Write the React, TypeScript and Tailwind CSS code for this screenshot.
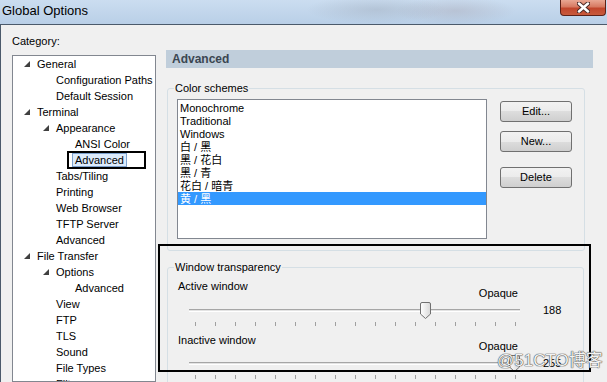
import React from 'react';

interface TreeItem {
  label: string;
  level: number;
  arrow?: boolean;
  selected?: boolean;
}

const treeItems: TreeItem[] = [
  { label: 'General', level: 0, arrow: true },
  { label: 'Configuration Paths', level: 1 },
  { label: 'Default Session', level: 1 },
  { label: 'Terminal', level: 0, arrow: true },
  { label: 'Appearance', level: 1, arrow: true },
  { label: 'ANSI Color', level: 2 },
  { label: 'Advanced', level: 2, selected: true },
  { label: 'Tabs/Tiling', level: 1 },
  { label: 'Printing', level: 1 },
  { label: 'Web Browser', level: 1 },
  { label: 'TFTP Server', level: 1 },
  { label: 'Advanced', level: 1 },
  { label: 'File Transfer', level: 0, arrow: true },
  { label: 'Options', level: 1, arrow: true },
  { label: 'Advanced', level: 2 },
  { label: 'View', level: 1 },
  { label: 'FTP', level: 1 },
  { label: 'TLS', level: 1 },
  { label: 'Sound', level: 1 },
  { label: 'File Types', level: 1 },
  { label: 'Filters', level: 1 },
];

const schemes = ['Monochrome', 'Traditional', 'Windows', '白 / 黑', '黑 / 花白', '黑 / 青', '花白 / 暗青', '黄 / 黑'];

const indent = ['pl-[11px]', 'pl-[30px]', 'pl-[49px]'];

function Expander() {
  return (
    <svg width="6" height="6" viewBox="0 0 6 6">
      <path d="M6 0V6H0Z" fill="#404040" />
    </svg>
  );
}

function CloseButton() {
  return (
    <div className="mr-[1px] flex h-[16px] w-[46px] items-center justify-center rounded-b-[4px] border border-t-0 border-[#5c2118] bg-[linear-gradient(180deg,#e9a793_0%,#d77a62_45%,#c1462c_55%,#c85a3c_100%)]">
      <svg width="13" height="11" viewBox="0 0 13 11">
        <path d="M2 1.5L11 9.5M11 1.5L2 9.5" stroke="#4a2a26" strokeWidth="4.5" strokeLinecap="round" />
        <path d="M2 1.5L11 9.5M11 1.5L2 9.5" stroke="#ffffff" strokeWidth="2.5" strokeLinecap="round" />
      </svg>
    </div>
  );
}

function WinButton({ label }: { label: string }) {
  return (
    <div className="flex h-[21px] w-[72px] items-center justify-center rounded-[3px] border border-[#707070] bg-[linear-gradient(180deg,#f2f2f2_0%,#ebebeb_50%,#dddddd_50%,#cfcfcf_100%)]">
      {label}
    </div>
  );
}

function Thumb() {
  return (
    <svg width="11" height="17" viewBox="0 0 11 17">
      <defs>
        <linearGradient id="thumbFill" x1="0" y1="0" x2="1" y2="0">
          <stop offset="0" stopColor="#ffffff" />
          <stop offset="1" stopColor="#d8d8d8" />
        </linearGradient>
      </defs>
      <path d="M0.5 2 Q0.5 0.5 2 0.5 H9 Q10.5 0.5 10.5 2 V12 L5.5 16.5 L0.5 12 Z" fill="url(#thumbFill)" stroke="#707070" />
    </svg>
  );
}

function Slider({ label, value, thumbLeft, opaqueOffset }: { label: string; value: number; thumbLeft: string; opaqueOffset: string }) {
  return (
    <div className="flex flex-col">
      <div className="flex w-[340px] items-start justify-between leading-[14px]">
        <span>{label}</span>
        <span className={opaqueOffset}>Opaque</span>
      </div>
      <div className="flex h-[20px] items-center">
        <div className="relative ml-[11px] flex h-[20px] w-[331px] items-center">
          <div className="h-[3px] w-full border-t border-b border-t-[#a6a6a6] border-b-white bg-[#e3e3e3]" />
          <div className={`absolute top-[2px] ${thumbLeft}`}>
            <Thumb />
          </div>
        </div>
        <span className="ml-[23px] leading-[14px]">{value}</span>
      </div>
      <div className="ml-[17px] mt-[2px] flex h-[4px] gap-[19px]">
        {Array.from({ length: 17 }, (_, i) => (
          <span key={i} className="h-[4px] w-[1px] bg-[#a0a0a0]" />
        ))}
      </div>
    </div>
  );
}

export default function App() {
  return (
    <div className="relative flex h-[382px] w-[607px] flex-col overflow-hidden bg-[#f0f0f0] font-['Liberation_Sans','Noto_Sans_CJK_SC',sans-serif] text-[11px] text-black">
      {/* Title bar */}
      <div className="flex h-[24px] shrink-0 items-start justify-between bg-[radial-gradient(ellipse_70px_14px_at_62%_40%,rgba(150,160,175,0.35),transparent),radial-gradient(ellipse_60px_14px_at_75%_45%,rgba(160,150,160,0.3),transparent),linear-gradient(180deg,#cbddf0_0%,#b9cfe7_100%)]">
        <span className="pl-[2px] pt-[3px] text-[13px] leading-[16px]">Global Options</span>
        <CloseButton />
      </div>

      <div className="flex min-h-0 flex-1 border-l border-t border-[#4b5a6b]">
        {/* Category tree */}
        <div className="flex w-[165px] shrink-0 flex-col pl-[11px]">
          <div className="pt-[8px] leading-[16px]">Category:</div>
          <div className="mt-[6px] w-[144px] flex-1 overflow-hidden border border-[#828790] bg-white">
            {treeItems.map((item, i) => (
              <div key={i} className={`relative flex h-[16px] items-center whitespace-nowrap ${indent[item.level]}`}>
                <span className="flex w-[13px] shrink-0 items-center">{item.arrow && <Expander />}</span>
                {item.selected ? (
                  <span className="-ml-[3px] flex h-[14px] items-center border border-[#7da2ce] bg-[#dcebfc] px-[2px]">{item.label}</span>
                ) : (
                  <span>{item.label}</span>
                )}
                {item.selected && <span className="absolute left-[54px] top-[-1px] h-[18px] w-[79px] border-2 border-black" />}
              </div>
            ))}
          </div>
        </div>

        {/* Settings panel */}
        <div className="flex flex-col pt-[25px]">
          <div className="flex h-[20px] w-[427px] items-center bg-[#c0cedb] pl-[6px] text-[12px] font-bold text-[#3b4651]">Advanced</div>

          <fieldset className="ml-[1px] mt-[13px] w-[418px] rounded-[3px] border border-[#d5dfe5]">
            <legend className="ml-[6px] px-[1px] leading-[14px]">Color schemes</legend>
            <div className="flex pb-[11px] pl-[9px] pt-[4px]">
              <div className="h-[140px] w-[310px] border border-[#828790] bg-white pt-[1px]">
                {schemes.map((s, i) => (
                  <div key={s} className={`h-[13px] pl-[2px] leading-[14px] ${i === schemes.length - 1 ? 'bg-[#3399ff] text-white' : ''}`}>
                    {s}
                  </div>
                ))}
              </div>
              <div className="ml-[13px] mt-[2px] flex flex-col gap-[9px]">
                <WinButton label="Edit..." />
                <WinButton label="New..." />
                <div className="mt-[6px]">
                  <WinButton label="Delete" />
                </div>
              </div>
            </div>
          </fieldset>

          <fieldset className="ml-[1px] mt-[9px] w-[417px] rounded-[3px] border border-[#d5dfe5]">
            <legend className="ml-[6px] px-[1px] leading-[14px]">Window transparency</legend>
            <div className="pb-[10px] pl-[10px] pt-[5px]">
              <Slider label="Active window" value={188} thumbLeft="left-[231px]" opaqueOffset="mt-[7px]" />
              <div className="mt-[7px]">
                <Slider label="Inactive window" value={255} thumbLeft="left-[320px]" opaqueOffset="mt-[6px]" />
              </div>
            </div>
          </fieldset>
        </div>
      </div>

      {/* annotation box */}
      <div className="absolute left-[158px] top-[244px] h-[128px] w-[433px] border-2 border-black" />

      {/* watermark */}
      <div className="absolute left-[497px] top-[350px] text-[17px] leading-[22px] text-[#f2f2f2] [text-shadow:0_0_1px_#505050,0_0_1px_#505050,0_0_1px_#505050]">@51CTO博客</div>
    </div>
  );
}
